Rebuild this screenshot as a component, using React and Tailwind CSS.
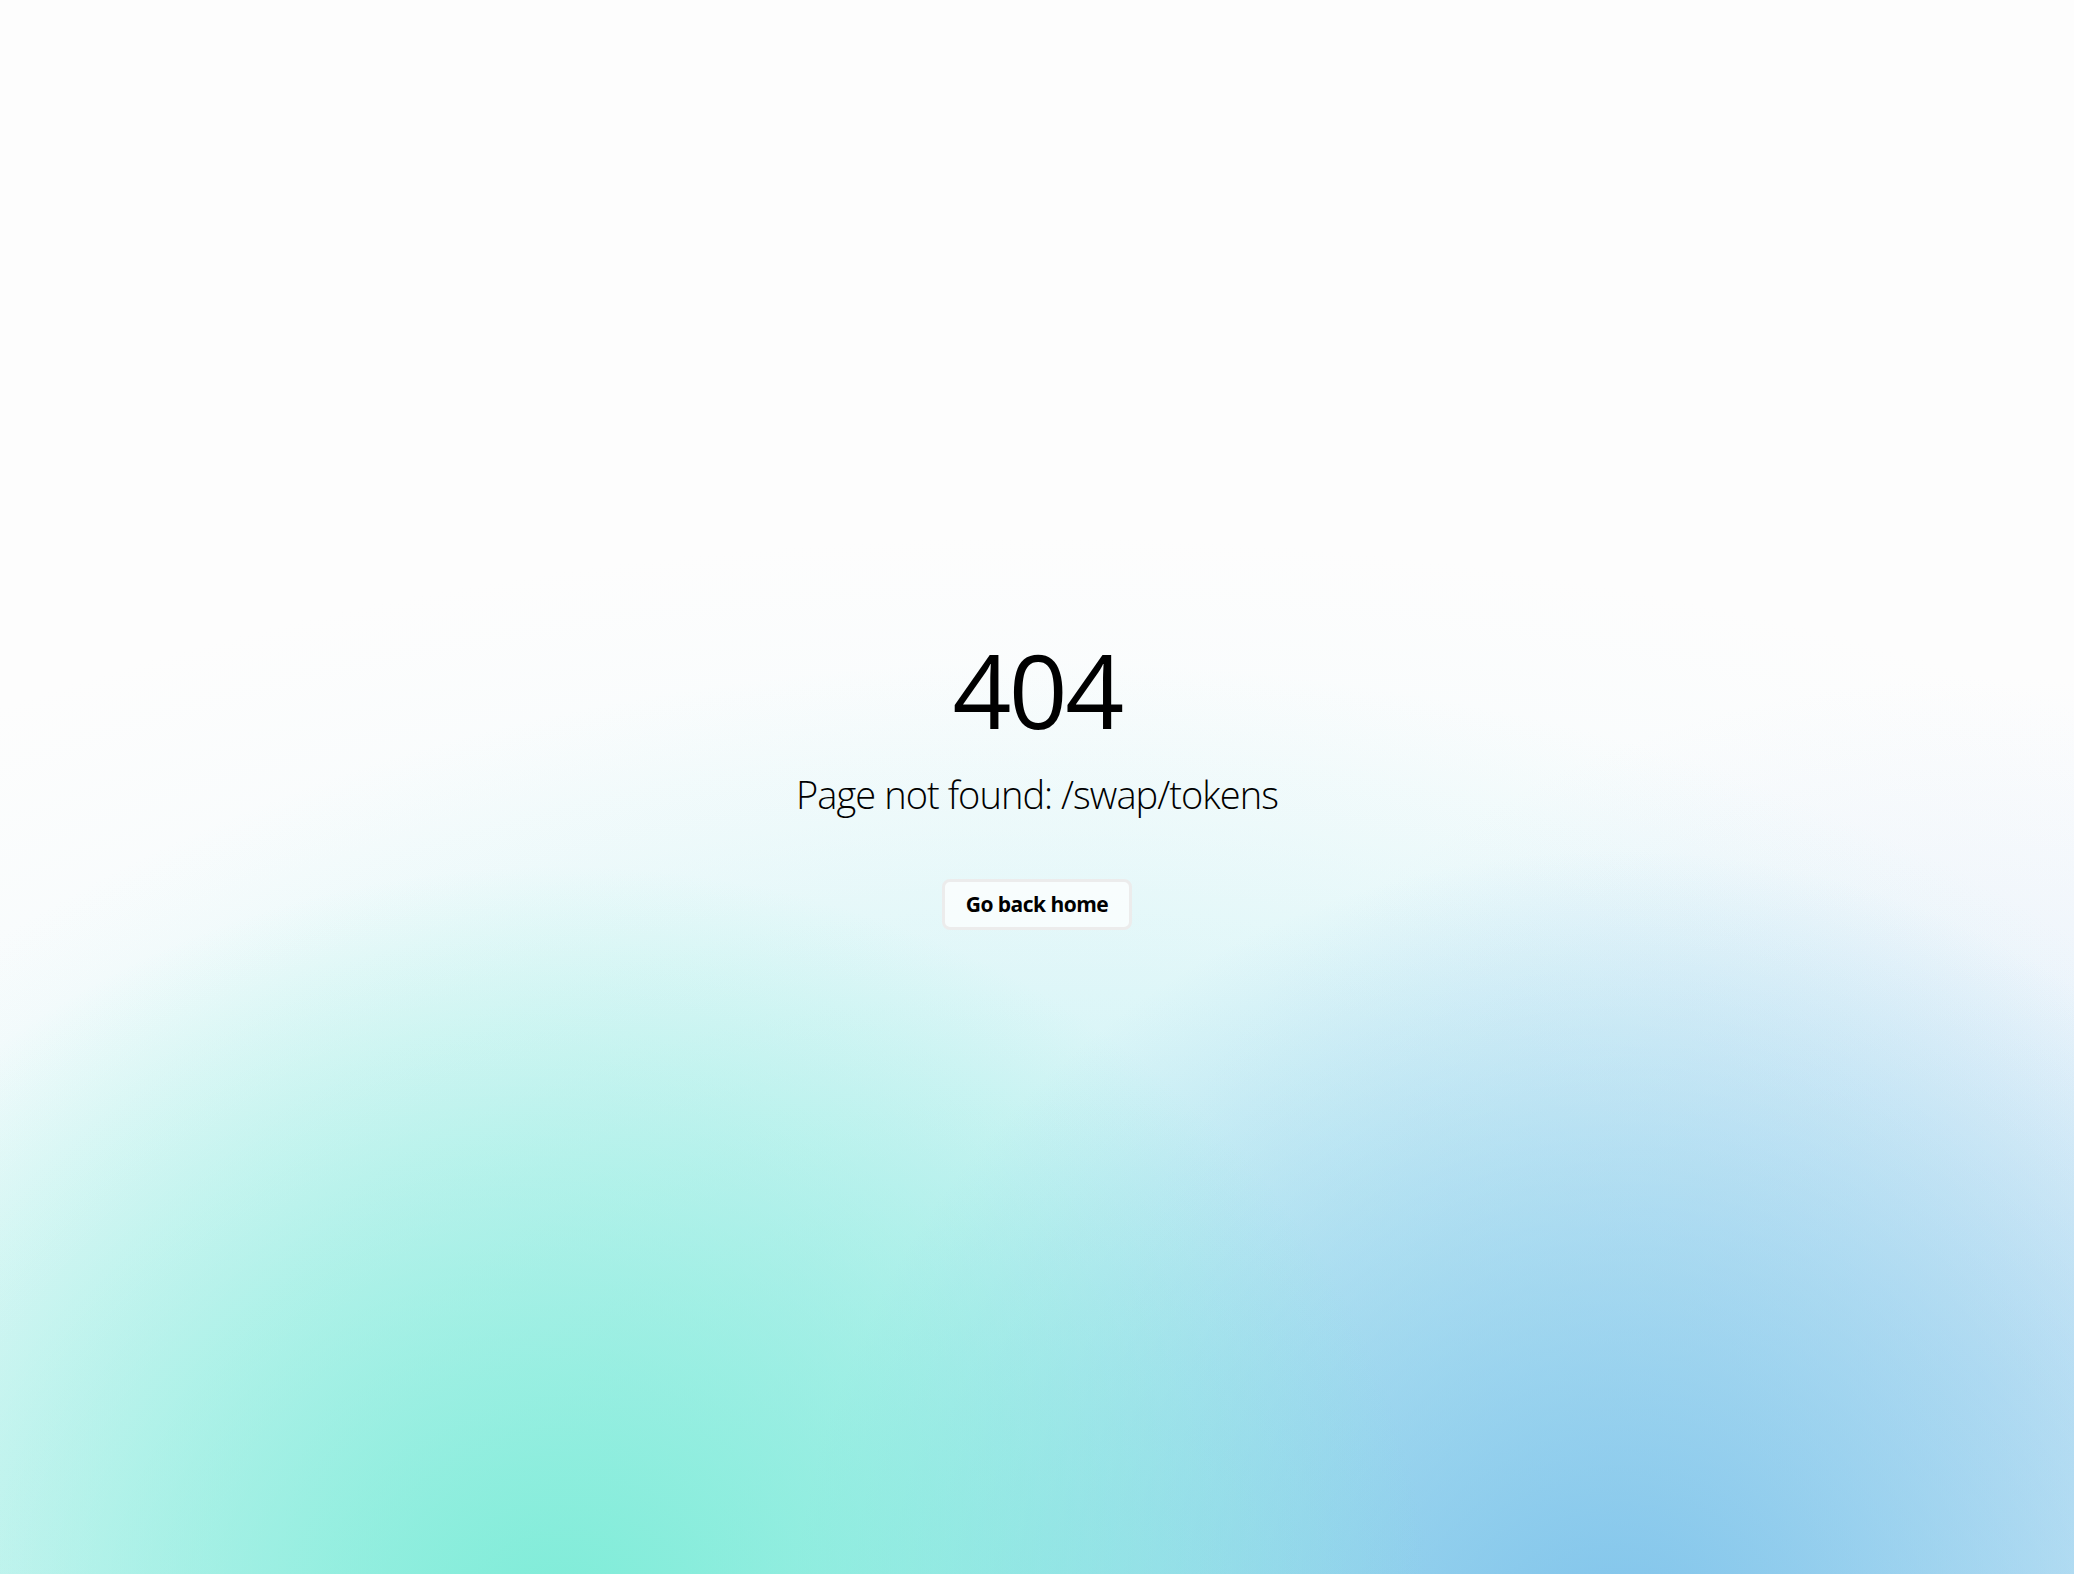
const NotFound = () => {
  return (
    <div
      className="min-h-screen w-full flex flex-col items-center justify-center pb-[6px] bg-[#fdfdfd] bg-[radial-gradient(ellipse_42%_48%_at_27%_103%,rgba(122,236,214,0.95),rgba(122,236,214,0)_100%),radial-gradient(ellipse_40%_52%_at_78%_106%,rgba(122,192,234,0.95),rgba(122,192,234,0)_100%),radial-gradient(ellipse_70%_58%_at_50%_100%,rgba(160,234,236,0.7),rgba(160,234,236,0)_100%),radial-gradient(ellipse_42%_45%_at_96%_88%,rgba(210,225,248,0.6),rgba(210,225,248,0)_100%),radial-gradient(ellipse_95%_72%_at_50%_106%,rgba(220,244,250,0.75),rgba(240,250,252,0)_100%)]"
      style={{ fontFamily: '"Open Sans", "Noto Sans", sans-serif' }}
    >
      <h1 className="text-[103px] leading-none font-normal text-black tracking-tight">404</h1>
      <p className="mt-[30px] text-[38px] leading-tight font-light text-black tracking-tight">
        Page not found: /swap/tokens
      </p>
      <button className="mt-[60px] px-[21px] h-[51px] rounded-lg border-[3px] border-[#ececec] bg-white/70 text-[21px] font-bold text-black tracking-tight">
        Go back home
      </button>
    </div>
  );
};

export default function App() {
  return <NotFound />;
}
